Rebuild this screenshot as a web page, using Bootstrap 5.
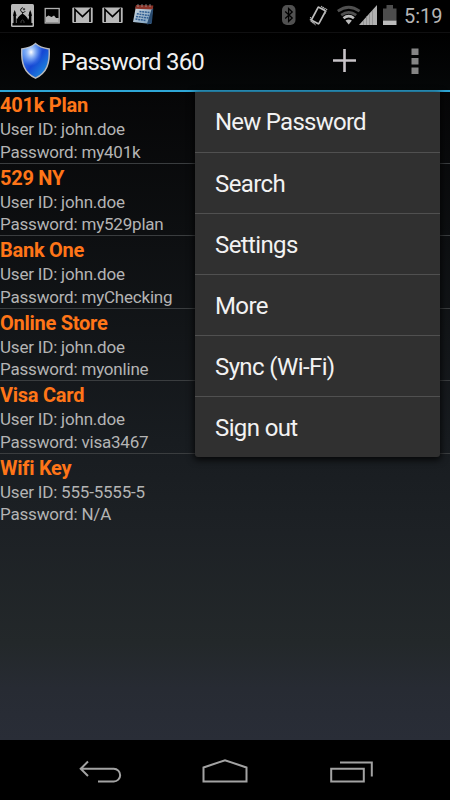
<!DOCTYPE html>
<html lang="en" data-bs-theme="dark">
<head>
<meta charset="utf-8">
<meta name="viewport" content="width=device-width, initial-scale=1">
<title>Password 360</title>
<link href="https://cdn.jsdelivr.net/npm/bootstrap@5.3.0/dist/css/bootstrap.min.css" rel="stylesheet">
<style>
body{font-family:Roboto,"Noto Sans",sans-serif;background:#000;height:800px;overflow:hidden}
svg{display:block;flex:none}
.screen{width:450px;height:800px}
.status{height:32px;flex:none}
.clock{font-size:20px;line-height:32px;color:#b5b5b5}
.actionbar{height:60px;flex:none;border-top:1px solid #101011;border-bottom:2px solid #2ea6d6;background:linear-gradient(#000,#050708)}
.app-title{font-size:24px;line-height:58px;color:#f0f0f0;letter-spacing:-.78px}
.content{background:linear-gradient(#060607,#0d0f11 22%,#181c20 54%,#1d2125 68%,#23282a 85%,#272b33 92%,#292d37)}
.entry{height:72.5px;border-bottom:1px solid #3a3d3f;color:#b4b4b4;font-size:17px;line-height:22.5px;letter-spacing:-.2px}
.entry:first-child{height:71.7px}
.entry:last-child{border-bottom:0}
.entry h2{font-size:20px;line-height:28.6px;font-weight:700;color:#ff7518;margin:0 0 -1.6px;letter-spacing:-.26px}
.entry:first-child h2{line-height:26px;margin:0}
.menu{left:195px;top:0;width:245px;border-radius:0 0 3px 3px;background:#303030;box-shadow:0 2px 7px 1px rgba(0,0,0,.8)}
.menu a{height:61px;padding:1px 20px 0;font-size:24px;line-height:61px;color:#f2f2f2;border-bottom:1px solid #505050;letter-spacing:-.62px}
.menu a:first-child{height:61px;padding-top:0;line-height:60px;letter-spacing:-.75px}
.menu a:last-child{border:0;height:60px}
.softkeys{height:60px;flex:none}
</style>
<script src="https://cdn.jsdelivr.net/npm/bootstrap@5.3.0/dist/js/bootstrap.bundle.min.js"></script>
</head>
<body>
<div class="screen d-flex flex-column overflow-hidden">
  <div class="status d-flex bg-black">
    <svg width="404" height="32" viewBox="0 0 404 32" role="img" aria-label="Notifications and device status">
      <defs>
        <linearGradient id="cal" x1="0" y1="0" x2="1" y2="1"><stop stop-color="#d5dde2"/><stop offset="1" stop-color="#7399ba"/></linearGradient>
      </defs>
      <!-- mosque -->
      <rect x="11" y="4" width="23" height="23" rx="1.5" fill="#b9b9b9"/>
      <path d="M12.500 25.500h20v-2.500H12.500zM13.500 23V13l1.200-3 1.200 3v10zM29 23V13l1.200-3 1.200 3v10zM17 23v-3q0-3 5.500-6.500Q28 17 28 20v3zM13 14.500h3.500v1.200H13zM28.500 14.500H32v1.200h-3.500zM16.500 18l1 2v3h-1zM28 18l1 2v3h-1z"/>
      <path d="M22.800 7.700a2.400 2.400 0 1 0 2.400 3.500" fill="none" stroke="#000" stroke-width="1"/>
      <path d="M24 8v2.400M22.800 9.200h2.400M22.500 12.500v2" stroke="#000" stroke-width=".7"/>
      <path d="M21 23v-2q1.500-2 3 0v2" stroke="#777" stroke-width=".5" fill="none"/>
      <!-- picture -->
      <rect x="45.200" y="8.500" width="14" height="14.500" fill="#000" stroke="#b0b0b0" stroke-width="1.300"/>
      <path d="M46 22.500v-5.500l2.500-1.500 3 1.500 2.500-1.500 2 2.500h2.800v4.500z" fill="#b8b8b8"/>
      <!-- mail -->
      <g id="mail"><rect x="72.300" y="7.500" width="20.400" height="15.500" rx="1" fill="#b9b9b9"/><path d="M75 22V9.500l7.500 7 7.500-7V22" fill="none" stroke="#000" stroke-width="1.700"/></g>
      <use href="#mail" x="30"/>
      <!-- calendar -->
      <path d="M136 6l17 1-2 17-18-2z" fill="url(#cal)"/>
      <path d="M136 5l17.300.5-.5 4-17.600-.7z" fill="#8c3328"/>
      <path d="M151.500 9.500l1.800-1-1.500 15-5 1z" fill="#294b70"/>
      <path d="M139.500 11.500l10 1M136.800 13.800l12.500 1.700M136 16.400l12.500 1.700M135.500 19l10 1.500" stroke="#315f94" stroke-width="1.500" stroke-dasharray="2 .7"/>
      <path d="M138 4v3M142 4v3M146 4v3M150 4v3" stroke="#aaa" stroke-width=".7"/>
      <!-- bluetooth -->
      <rect x="282" y="5" width="13.500" height="20" rx="5" fill="#515151"/>
      <path d="M285.200 11.500l7 6.500-3.600 3.500V8.500l3.600 3.500-7 6.500" fill="none" stroke="#000" stroke-width="1.300"/>
      <!-- rotating phone -->
      <rect x="-4.200" y="-7.500" width="8.400" height="15" rx="1" transform="translate(318.500 15.500) rotate(28)" fill="#000" stroke="#bcbcbc" stroke-width="1.700"/>
      <path d="M321 6.200l5.700 3.200-2.200 5M322 7.800l2.800 1.800M310.600 17l-.3 3.500 5.500 4.500M311.500 21.500l3.500 2" fill="none" stroke="#aaa" stroke-width="1.200" stroke-dasharray="1.400 .6"/>
      <!-- wifi -->
      <g fill="none" stroke-width="2.700"><path d="M337.800 11.200Q348.700 3.300 359.600 11.200M341.200 15.200Q348.700 9.600 356.200 15.200" stroke="#505050"/><path d="M343.500 18.200Q348.700 14 353.900 18.200" stroke="#bbb"/></g>
      <path d="M345.500 20.600q3.200-2 6.400 0l-3.200 4z" fill="#bbb"/>
      <!-- signal -->
      <path d="M359 25L377 5v20z" fill="#b0b0b0"/>
      <path d="M363.500 20v5M366.500 16v9M369.500 13v12M372.500 10v15" stroke="#808080" stroke-width=".6"/>
      <!-- battery -->
      <path d="M383 8.500h3.500V5h6.500v3.500h3.500v12H383z" fill="#4d4d4d"/><path d="M383 20.500h13.500V25H383z" fill="#bcbcbc"/>
    </svg>
    <span class="clock">5:19</span>
  </div>

  <header class="actionbar d-flex">
    <svg width="61" height="57" viewBox="0 33 61 57" aria-hidden="true">
      <defs>
        <linearGradient id="blue" x1="0" y1="0" x2="1" y2="1"><stop stop-color="#62a2f3"/><stop offset=".5" stop-color="#1647d4"/><stop offset=".78" stop-color="#1b7cda"/><stop offset="1" stop-color="#164ec4"/></linearGradient>
        <radialGradient id="glow" cx=".34" cy=".25" r=".4"><stop stop-color="#fff"/><stop offset=".4" stop-color="#b0d2ff" stop-opacity=".7"/><stop offset="1" stop-color="#77aeff" stop-opacity="0"/></radialGradient>
      </defs>
      <path d="M35.500 43.500c4 3.500 8.500 4.800 13.700 5.500.7 14-2 23.500-13.700 29.200C23.800 72.500 21.100 63 21.800 49c5.200-.7 9.700-2 13.700-5.500z" fill="url(#blue)" stroke="#b9b9bb" stroke-width="1.500"/>
      <path d="M35.500 43.500c4 3.500 8.500 4.800 13.700 5.500.7 14-2 23.500-13.700 29.200C23.800 72.500 21.100 63 21.800 49c5.200-.7 9.700-2 13.700-5.500z" fill="url(#glow)"/>
    </svg>
    <span class="app-title">Password 360</span>
    <svg class="ms-auto" width="120" height="57" viewBox="330 33 120 57" role="img" aria-label="Add, more options">
      <path d="M333 60.500h23M344.500 49v23" stroke="#c8c4c8" stroke-width="2.600"/>
      <path d="M411.500 48.500h7V55h-7zM411.500 58h7v6.500h-7zM411.500 67.500h7V74h-7z" fill="#858585"/>
    </svg>
  </header>

  <main class="content position-relative flex-grow-1">
    <div class="d-flex flex-column">
      <div class="entry"><h2>401k Plan</h2><div>User ID: john.doe</div><div>Password: my401k</div></div>
      <div class="entry"><h2>529 NY</h2><div>User ID: john.doe</div><div>Password: my529plan</div></div>
      <div class="entry"><h2>Bank One</h2><div>User ID: john.doe</div><div>Password: myChecking</div></div>
      <div class="entry"><h2>Online Store</h2><div>User ID: john.doe</div><div>Password: myonline</div></div>
      <div class="entry"><h2>Visa Card</h2><div>User ID: john.doe</div><div>Password: visa3467</div></div>
      <div class="entry"><h2>Wifi Key</h2><div>User ID: 555-5555-5</div><div>Password: N/A</div></div>
    </div>
    <nav class="menu position-absolute d-flex flex-column">
      <a class="text-decoration-none" href="#">New Password</a>
      <a class="text-decoration-none" href="#">Search</a>
      <a class="text-decoration-none" href="#">Settings</a>
      <a class="text-decoration-none" href="#">More</a>
      <a class="text-decoration-none" href="#">Sync (Wi-Fi)</a>
      <a class="text-decoration-none" href="#">Sign out</a>
    </nav>
  </main>

  <footer class="softkeys bg-black">
    <svg width="450" height="60" viewBox="0 740 450 60" fill="none" stroke="#a3a3a3" stroke-width="2" role="img" aria-label="Back, home, recent apps">
      <path d="M88 761.500l-7.300 7.300 7.300 7.200M80.500 768.800h33.300a6.300 6.300 0 0 1 0 12.700H98"/>
      <path d="M203.500 781.500v-14l21.500-7.300 21.500 7.300v14z"/>
      <path d="M331.200 768.700h32.600v12.800h-32.600zM340 762.500h31.800v14"/>
    </svg>
  </footer>
</div>
</body>
</html>
